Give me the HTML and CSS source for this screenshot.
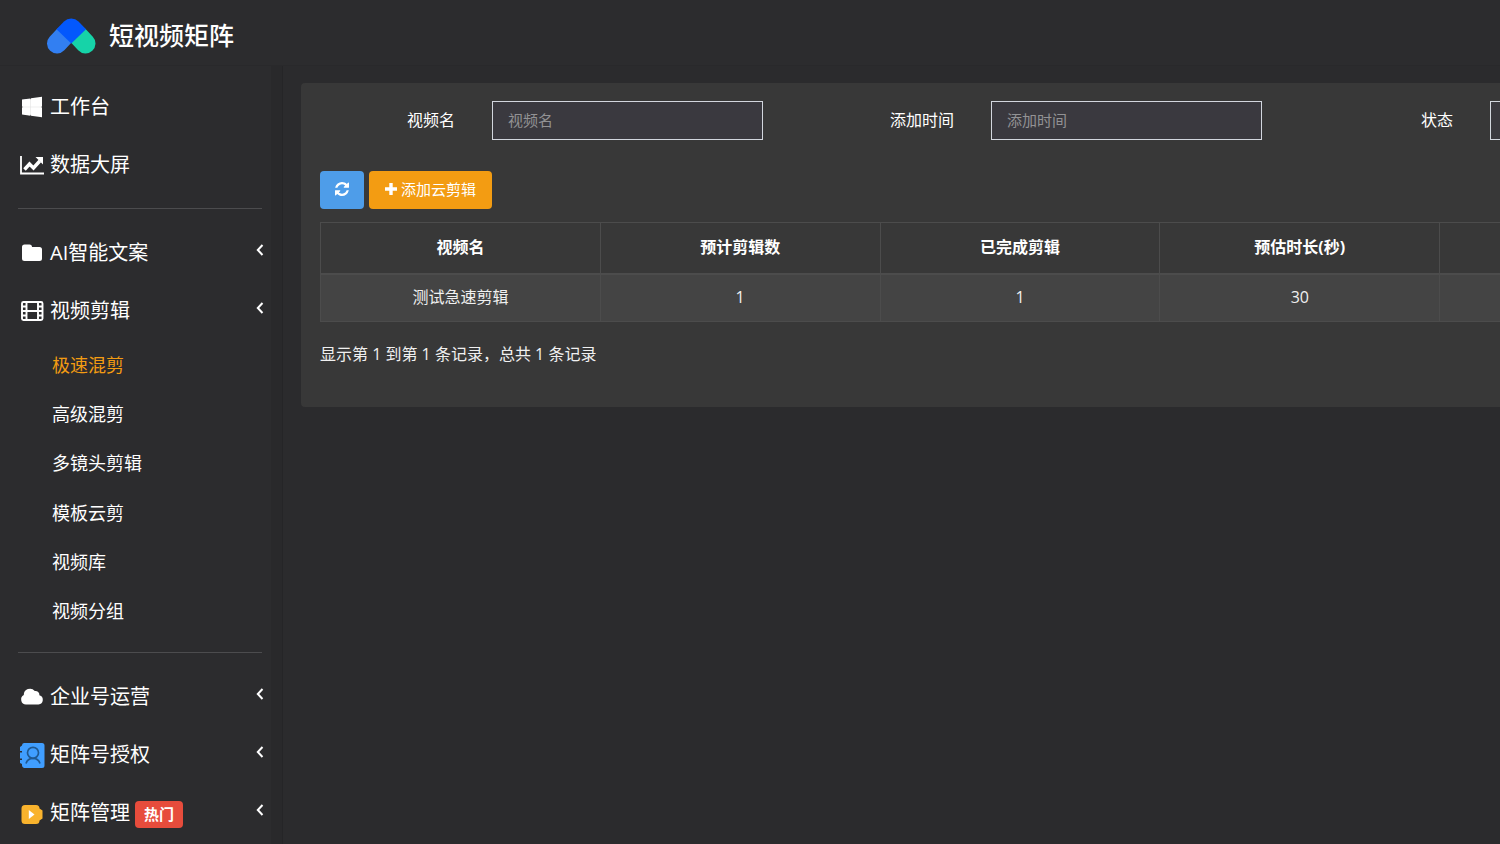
FILE: index.html
```html
<!DOCTYPE html>
<html lang="zh-CN">
<head>
<meta charset="utf-8">
<title>短视频矩阵</title>
<link rel="stylesheet" href="styles.css">
</head>
<body>
<header class="topbar">
  <svg class="logo" viewBox="0 0 50 36" aria-hidden="true">
    <path fill="none" stroke="#327ff2" stroke-width="20" stroke-linecap="round" d="M11 25.500L18 18"/>
    <path fill="none" stroke="#16d3a8" stroke-width="20" stroke-linecap="round" d="M39.500 25.500L32.500 18"/>
    <path fill="#0358fd" d="M10.500 11.200L18 3.600a10.200 10.200 0 0 1 14.500 0L40 11.200 25.250 25.500z"/>
  </svg>
  <span class="brand">短视频矩阵</span>
</header>
<div class="shell">
  <nav class="sidebar">
    <a class="item" href="#"><svg class="icon" viewBox="0 0 24 24"><path fill="#ddd" d="M3 5l18-2v18L3 19z"/><path fill="#fff" d="M2 4.600l8.500-1.200v8.300H2zM11 3.300L22 1.800v9.900H11zM2 12.300h8.500v8.400L2 19.500zM11 12.300H22v10l-11-1.500z"/></svg>工作台</a>
    <a class="item" href="#"><svg class="icon" viewBox="0 0 24 24"><path fill="none" stroke="#fff" stroke-width="1.800" d="M1 3v17.500h23"/><path fill="none" stroke="#fff" stroke-width="3.400" d="M4.500 16.500l5-5.500 4 4 6.300-7"/><path fill="#fff" d="M15.500 4h7.500v7.500z"/></svg>数据大屏</a>
    <hr class="rule">
    <a class="item" href="#"><svg class="icon" viewBox="0 0 24 24"><path fill="#fff" d="M4.500 3.500h5a2.500 2.500 0 0 1 2.500 2.500h7.500A2.500 2.500 0 0 1 22 8.500v9a2.500 2.500 0 0 1-2.500 2.500h-15A2.500 2.500 0 0 1 2 17.500V6a2.500 2.500 0 0 1 2.500-2.500z"/></svg>AI智能文案<svg class="caret" viewBox="0 0 8 12"><path d="M6.500 1L1.800 6l4.700 5"/></svg></a>
    <a class="item" href="#"><svg class="icon" viewBox="0 0 24 24"><g fill="none" stroke="#fff" stroke-width="1.900"><rect x="2" y="3" width="20.500" height="18" rx="1.500"/><path d="M6.500 3v18M18 3v18M6.500 12H18M2 7.500h4.500M2 12h4.500M2 16.500h4.500M18 7.500h4.500M18 12h4.500M18 16.500h4.500"/></g></svg>视频剪辑<svg class="caret" viewBox="0 0 8 12"><path d="M6.500 1L1.800 6l4.700 5"/></svg></a>
    <div class="submenu">
      <a class="sub active" href="#">极速混剪</a>
      <a class="sub" href="#">高级混剪</a>
      <a class="sub" href="#">多镜头剪辑</a>
      <a class="sub" href="#">模板云剪</a>
      <a class="sub" href="#">视频库</a>
      <a class="sub" href="#">视频分组</a>
    </div>
    <hr class="rule">
    <a class="item" href="#"><svg class="icon" viewBox="0 0 24 24"><path fill="#fff" d="M6 19.500a5 5 0 0 1-2.200-9.400A6.200 6.200 0 0 1 14.800 6a3.900 3.900 0 0 1 4.600 4.300 4.700 4.700 0 0 1-.9 9.200z"/></svg>企业号运营<svg class="caret" viewBox="0 0 8 12"><path d="M6.500 1L1.800 6l4.700 5"/></svg></a>
    <a class="item" href="#"><svg class="icon" viewBox="0 0 24 24"><path fill="#409eff" d="M4 0h18a2.500 2.500 0 0 1 2.500 2.500v20a2.500 2.500 0 0 1-2.500 2.500H4a2.500 2.500 0 0 1-2-2.500V21L0 20v-3h2v-1.500H0v-6h2V8H0V4l2-1.500A2.500 2.500 0 0 1 4 0z"/><g fill="none" stroke="#1f5890" stroke-width="1.700"><circle cx="13" cy="9.800" r="5.500"/><path d="M6 20.500c1-3.500 3.300-5.200 7-5.200s6 1.700 7 5.200"/></g></svg>矩阵号授权<svg class="caret" viewBox="0 0 8 12"><path d="M6.500 1L1.800 6l4.700 5"/></svg></a>
    <a class="item" href="#"><svg class="icon" viewBox="0 0 24 24"><path fill="#f9b32d" d="M5 4h11a3.500 3.500 0 0 1 3.500 3.500l3 2v8l-3 2A3.500 3.500 0 0 1 16 23H5a3.500 3.500 0 0 1-3.500-3.500v-12A3.500 3.500 0 0 1 5 4z"/><path fill="#fff" d="M8.800 9l5.700 4.500-5.700 4.500z"/></svg>矩阵管理<span class="badge">热门</span><svg class="caret" viewBox="0 0 8 12"><path d="M6.500 1L1.800 6l4.700 5"/></svg></a>
  </nav>
  <main class="content">
    <section class="panel">
      <form class="filters">
        <div class="field"><label for="name">视频名</label><input id="name" type="text" placeholder="视频名"></div>
        <div class="field"><label for="time">添加时间</label><input id="time" type="text" placeholder="添加时间"></div>
        <div class="field"><label for="state">状态</label><select id="state"></select></div>
      </form>
      <div class="toolbar">
        <button class="btn refresh" type="button" aria-label="刷新"><svg viewBox="0 0 1536 1536"><path fill="#fff" d="M1511 928q0 5-1 7-64 268-268 434.500T764 1536q-146 0-282.500-55T238 1324l-129 129q-19 19-45 19t-45-19-19-45V960q0-26 19-45t45-19h448q26 0 45 19t19 45-19 45l-137 137q71 66 161 102t187 36q134 0 250-65t186-179q11-17 53-117 8-23 30-23h192q13 0 22.500 9.500T1511 928zm25-800v448q0 26-19 45t-45 19h-448q-26 0-45-19t-19-45 19-45l138-138Q969 256 768 256q-134 0-250 65T332 500q-11 17-53 117-8 23-30 23H50q-13 0-22.500-9.500T18 608v-7q65-268 270-434.500T768 0q146 0 284 55.500T1297 212l130-129q19-19 45-19t45 19 19 45z"/></svg></button>
        <button class="btn add" type="button"><svg viewBox="0 0 12 12"><path stroke="#fff" stroke-width="3.400" d="M6 0v12M0 6h12"/></svg>添加云剪辑</button>
      </div>
      <table class="records">
        <thead><tr><th>视频名</th><th>预计剪辑数</th><th>已完成剪辑</th><th>预估时长(秒)</th><th></th></tr></thead>
        <tbody><tr><td>测试急速剪辑</td><td>1</td><td>1</td><td>30</td><td></td></tr></tbody>
      </table>
      <p class="summary">显示第 1 到第 1 条记录，总共 1 条记录</p>
    </section>
  </main>
</div>
</body>
</html>
```
FILE: styles.css
```css
* { box-sizing: border-box; }
body {
  margin: 0;
  height: 100vh;
  display: flex;
  flex-direction: column;
  overflow: hidden;
  background: #2b2b2d;
  color: #fff;
  font: 16px/24px "Open Sans", "Noto Sans CJK SC", sans-serif;
}
.topbar {
  flex: none;
  display: flex;
  align-items: center;
  gap: 13px;
  height: 66px;
  padding: 6px 46px 0;
  background: #2c2c2e;
  border-bottom: 1px solid #29292b;
}
.logo { width: 50px; height: 36px; }
.brand { font-size: 25px; line-height: 36px; font-weight: 500; padding-bottom: 2px; }
.shell { flex: 1; min-height: 0; display: flex; }
.sidebar {
  flex: none;
  width: 283px;
  padding: 12px 18px 0;
  background: #2c2c2e;
  border-right: 1px solid #252527;
  box-shadow: inset -11px 0 #29292b;
  overflow: hidden;
}
.item {
  display: flex;
  align-items: center;
  height: 58px;
  padding-left: 2px;
  color: #fff;
  font-size: 20px;
  text-decoration: none;
}
.icon { width: 24px; height: 24px; margin-right: 6px; overflow: visible; }
.caret { width: 8px; height: 12px; margin: 0 0 7px auto; }
.caret path { fill: none; stroke: #fff; stroke-width: 2; }
.rule { width: 244px; margin: 14px 0 15px; border: 0; border-top: 1px solid #4c4c4e; }
.submenu { display: grid; grid-template-rows: repeat(6, 1fr); height: 298px; padding-bottom: 2px; }
.sub {
  display: flex;
  align-items: center;
  padding-left: 34px;
  color: #fff;
  font-size: 18px;
  text-decoration: none;
}
.sub.active { color: #f39c12; }
.badge {
  margin: 2px 0 0 5px;
  padding: 0 9px;
  border-radius: 4px;
  background: #e74c3c;
  font-size: 15px;
  line-height: 27px;
  font-weight: 700;
}
.content { flex: 1; min-width: 0; overflow: hidden; padding: 17px 0 0 18px; }
.panel {
  min-width: 1480px;
  padding: 18px 19px 41px;
  border-radius: 4px;
  background: #383838;
}
.filters { display: flex; gap: 56px; }
.field { flex: none; display: grid; grid-template-columns: 135px 271px; gap: 37px; align-items: center; }
.field label { text-align: right; padding-bottom: 2px; }
.field input, .field select {
  width: 100%;
  height: 39px;
  padding: 0 15px 2px;
  border: 1px solid #d2d6de;
  border-radius: 0;
  appearance: none;
  background: #3a393f;
  color: #fff;
  font: inherit;
  font-size: 15px;
}
.field input::placeholder { color: #929294; }
.toolbar { display: flex; gap: 5px; margin: 31px 0 13px; }
.btn {
  display: flex;
  align-items: center;
  justify-content: center;
  gap: 4px;
  height: 38px;
  padding: 0 15px 2px;
  border: 0;
  border-radius: 4px;
  color: #fff;
  font: inherit;
  font-size: 15px;
}
.refresh { background: #4e9de9; }
.add { padding: 0 16px 2px; background: #f39c12; }
.btn svg { width: 12px; height: 12px; }
.refresh svg { width: 14px; height: 14px; }
.records { width: 1400px; table-layout: fixed; border-collapse: collapse; text-align: center; }
.records th, .records td { border: 1px solid #4c4c4c; padding: 0 0 2px; }
.records th { height: 51px; border-bottom-width: 2px; font-weight: 700; }
.records td { height: 48px; background: #444; color: #f0f0f0; }
.summary { margin: 20px 0 0; color: #f0f0f0; }
```
